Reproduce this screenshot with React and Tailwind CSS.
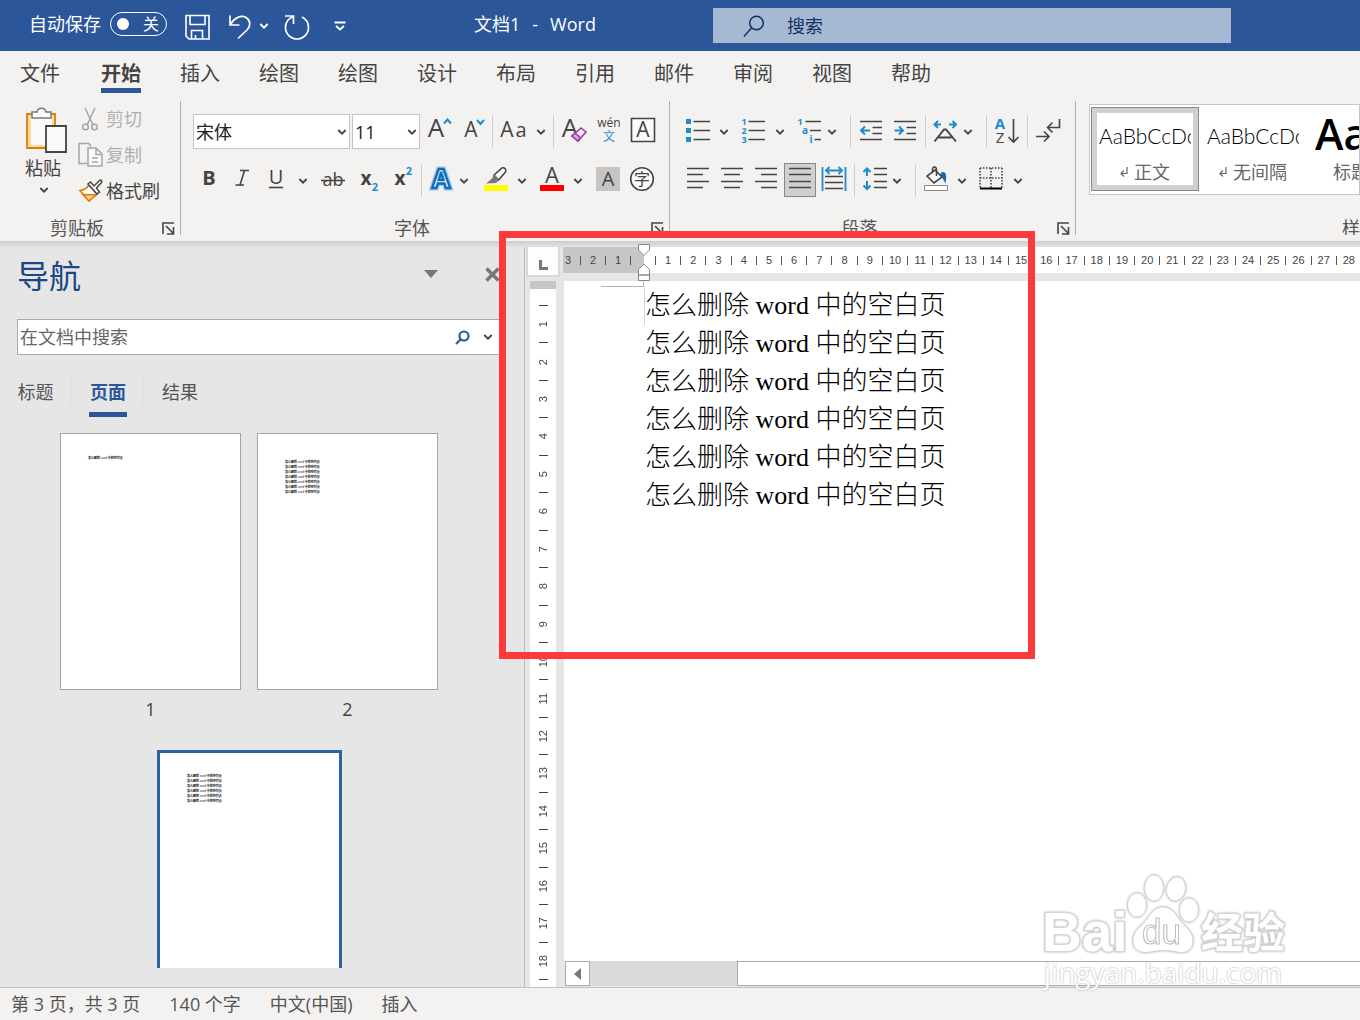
import React from "react";

const MENU = [
  "文件",
  "开始",
  "插入",
  "绘图",
  "绘图",
  "设计",
  "布局",
  "引用",
  "邮件",
  "审阅",
  "视图",
  "帮助",
];

const range = (n) => Array.from({ length: n }, (_, i) => i + 1);

/* ---------- small building blocks ---------- */

const Icon = ({ w = 28, h = 28, children }) => (
  <svg
    width={w}
    height={h}
    viewBox={`0 0 ${w} ${h}`}
    fill="none"
    stroke="#444"
    strokeWidth="1.6"
    className="shrink-0 overflow-visible"
    aria-hidden="true"
  >
    {children}
  </svg>
);

const Glyph = ({ x, y, size, color = "#444", bold, children }) => (
  <text
    x={x}
    y={y}
    fontSize={size}
    fill={color}
    stroke="none"
    fontWeight={bold ? 700 : 400}
    textAnchor="middle"
  >
    {children}
  </text>
);

const Chevron = () => (
  <Icon w={10} h={6}>
    <path d="M1.300 1L5 4.700 8.700 1" strokeWidth="1.800" />
  </Icon>
);

const Tool = ({ label, className, children }) => (
  <button
    type="button"
    aria-label={label}
    className={`flex h-[34px] shrink-0 items-center justify-center pb-0.5 ${className}`}
  >
    {children}
  </button>
);

const More = ({ label, className = "w-4" }) => (
  <button
    type="button"
    aria-label={`${label}选项`}
    className={`flex h-[34px] shrink-0 items-center justify-center pt-0.5 ${className}`}
  >
    <Chevron />
  </button>
);

const Separator = ({ className = "" }) => (
  <span className={`mt-px h-[33px] w-px shrink-0 bg-[#d0cecd] ${className}`} />
);

const Launcher = ({ label }) => (
  <button type="button" aria-label={label} className="mr-[5px]">
    <Icon w={13} h={13}>
      <path d="M1 12V1h11M4 4l7 7M11.5 5v7H5" />
    </Icon>
  </button>
);

const Group = ({ title, className, children }) => (
  <section
    className={`flex h-[134px] shrink-0 flex-col justify-between border-r border-[#b3b0ad] ${className}`}
  >
    {children}
    <div className="flex h-3.5 items-center">
      <h2 className="flex-1 pr-2 text-center text-lg leading-[14px] text-[#555]">
        {title}
      </h2>
      <Launcher label={`${title}设置`} />
    </div>
  </section>
);

/* ---------- title bar ---------- */

const TitleBar = () => (
  <header className="flex h-[51px] shrink-0 items-center bg-[#2b579a] pb-1 text-lg text-white">
    <label htmlFor="autosave" className="pl-[29px]">
      自动保存
    </label>
    <button
      id="autosave"
      type="button"
      role="switch"
      aria-checked="false"
      className="ml-[9px] flex h-6 w-[57px] items-center justify-between rounded-full border border-white pr-[7px] pl-1.5 text-base leading-none"
    >
      <span className="size-3 rounded-full bg-white" />
      <span>关</span>
    </button>
    <button type="button" aria-label="保存" className="mt-1.5 ml-[18px]">
      <svg width="25" height="26" viewBox="0 0 25 26" fill="none" stroke="#fff" strokeWidth="1.600">
        <path d="M1 1.500h23V25H4l-3-3zM5 1.500v9h15v-9M6.500 25v-8.500h11V25M10.500 25v-4" />
      </svg>
    </button>
    <button type="button" aria-label="撤消" className="mt-1.5 ml-[18px]">
      <svg width="24" height="26" viewBox="0 0 24 26" fill="none" stroke="#fff" strokeWidth="1.700">
        <path d="M2 1.500v9.500h9.500M2 11C6 4 13 .5 18 3.500c5 3 4.500 8.500 1.500 12L10 24.500" />
      </svg>
    </button>
    <button type="button" aria-label="撤消选项" className="mt-1 ml-[7px]">
      <svg width="10" height="6" viewBox="0 0 10 6" fill="none" stroke="#fff" strokeWidth="1.800">
        <path d="M1.300 1L5 4.700 8.700 1" />
      </svg>
    </button>
    <button type="button" aria-label="恢复" className="mt-1.5 ml-[15px]">
      <svg width="26" height="26" viewBox="0 0 26 26" fill="none" stroke="#fff" strokeWidth="1.700">
        <path d="M1 2h8.500v8M9.500 2.500C4 4.500 1.500 9 1.500 13.500a11.500 11.500 0 0 0 23 0c0-4.500-2.500-8.500-6.500-10.500" />
      </svg>
    </button>
    <button type="button" aria-label="自定义快速访问工具栏" className="mt-1 ml-6">
      <svg width="12" height="10" viewBox="0 0 12 10" fill="none" stroke="#fff" strokeWidth="1.800">
        <path d="M.5 1.500h11M2 5l4 3.500L10 5" />
      </svg>
    </button>
    <h1 className="ml-32 flex w-[239px] gap-3">
      <span>文档1</span>
      <span>-</span>
      <span>Word</span>
    </h1>
    <div className="mt-1 flex h-[35px] w-[518px] items-center bg-[#a6b9d3] pl-[30px]">
      <svg width="22" height="22" viewBox="0 0 22 22" fill="none" stroke="#13305f" strokeWidth="1.500">
        <circle cx="13.500" cy="8" r="6.800" />
        <path d="M8.500 13L1 21.500" />
      </svg>
      <input
        type="text"
        aria-label="搜索"
        placeholder="搜索"
        className="ml-[22px] min-w-0 flex-1 outline-none placeholder:text-[#13305f]"
      />
    </div>
  </header>
);

const MenuBar = () => (
  <nav className="flex h-[50px] shrink-0 gap-[39px] pt-[5px] pl-5 text-xl leading-9 text-[#444]">
    {MENU.map((name, i) => (
      <button
        key={i}
        type="button"
        className={
          i === 1
            ? "ml-0.5 h-[37px] border-b-[5px] border-[#2b579a] font-bold"
            : "h-[37px] border-b-[5px] border-transparent"
        }
      >
        {name}
      </button>
    ))}
  </nav>
);

/* ---------- ribbon ---------- */

const ClipboardGroup = () => (
  <Group title="剪贴板" className="w-[181px]">
    <div className="flex gap-3 pt-1.5 pl-6 text-lg">
      <button type="button" className="flex flex-col items-start text-[#444]">
        <svg width="43" height="46" viewBox="0 0 43 46" fill="none" strokeWidth="1.800">
          <path d="M3 7h28v34H3z" fill="#f9dc95" stroke="#e07a10" />
          <path d="M7 9h21v29H7z" fill="#fafafa" />
          <path d="M8 11V5h5c1-5 8-5 9 0h5v6z" fill="#fafafa" stroke="#7a7a7a" strokeWidth="1.500" />
          <path d="M22 19h20v26H22z" fill="#fafafa" stroke="#444" />
        </svg>
        <span className="mt-0.5 h-[26px] w-[38px] text-center leading-[26px]">粘贴</span>
        <span className="mt-1.5 flex w-10 justify-center">
          <Chevron />
        </span>
      </button>
      <div className="flex flex-col gap-3 leading-6">
        <button type="button" disabled className="flex items-center gap-[3px] text-[#b1b0af]">
          <Icon w={24} h={24}>
            <g stroke="#a5a5a5" strokeWidth="1.500">
              <path d="M6 1l8 17M16 1L8 18" />
              <circle cx="6.500" cy="20" r="2.800" />
              <circle cx="15.500" cy="20" r="2.800" />
            </g>
          </Icon>
          剪切
        </button>
        <button type="button" disabled className="flex items-center gap-[3px] text-[#b1b0af]">
          <Icon w={24} h={24}>
            <g stroke="#a5a5a5" strokeWidth="1.500">
              <path d="M8 20.500H0V.5h10l2 3" />
              <path d="M9 5h8l6 6v12H9z" fill="#fafafa" />
              <path d="M17 5v6.500h6M13 15h6M13 19h6" />
            </g>
          </Icon>
          复制
        </button>
        <button type="button" className="flex items-center gap-[3px] text-[#444]">
          <Icon w={24} h={24}>
            <path d="M1 11.500C5 11 8 9 10 6l8 9c-3 2-6 4-8 7z" fill="#fff" stroke="#e07a10" />
            <path d="M4 15.500l13 .5-7 6z" fill="#f9d48a" stroke="#e07a10" />
            <path
              d="M9 5l2.500-2 3.500 4 5.500-5.500c1.500-1 3 .5 2 2L17.500 9l3 4-2.500 2z"
              fill="#fafafa"
              strokeWidth="1.500"
            />
          </Icon>
          格式刷
        </button>
      </div>
    </div>
  </Group>
);

const SelectBox = ({ label, value, className }) => (
  <div className={`relative shrink-0 ${className}`}>
    <select
      aria-label={label}
      defaultValue={value}
      className="h-[35px] w-full appearance-none border border-[#c6c4c2] bg-white pl-0.5 text-lg text-[#222] outline-none"
    >
      <option>{value}</option>
    </select>
    <span className="pointer-events-none absolute top-[15px] right-[3px]">
      <Chevron />
    </span>
  </div>
);

const FontGroup = () => (
  <Group title="字体" className="w-[489px]">
    <div className="flex flex-col gap-3.5 pt-[13px] pl-3">
      <div className="flex h-[35px] items-start">
        <SelectBox label="字体" value="宋体" className="w-[157px]" />
        <SelectBox label="字号" value="11" className="ml-0.5 w-[68px]" />
        <Tool label="增大字号" className="w-9">
          <Icon>
            <Glyph x={12} y={21} size={26}>A</Glyph>
            <path d="M20 7.500l3.500-4 3.500 4" stroke="#1e8bcd" strokeWidth="2" />
          </Icon>
        </Tool>
        <Tool label="减小字号" className="w-9">
          <Icon>
            <Glyph x={11} y={21} size={21}>A</Glyph>
            <path d="M17 4l3.500 4L24 4" stroke="#1e8bcd" strokeWidth="2" />
          </Icon>
        </Tool>
        <Separator />
        <Tool label="更改大小写" className="w-11 pr-1">
          <Icon>
            <Glyph x={8} y={21} size={21}>A</Glyph>
            <Glyph x={22} y={21} size={20}>a</Glyph>
          </Icon>
        </Tool>
        <More label="更改大小写" className="w-4 pr-2" />
        <Separator />
        <Tool label="清除所有格式" className="ml-1 w-[34px]">
          <Icon>
            <Glyph x={9} y={21} size={26}>A</Glyph>
            <path d="M11 20l9-8 5 4-8 9z" fill="#f3f2f1" stroke="#9b3ba8" />
            <path d="M11 20l3-3 5.500 5-2.500 3z" fill="#d9a8e0" stroke="#9b3ba8" />
          </Icon>
        </Tool>
        <Tool label="拼音指南" className="w-[34px]">
          <Icon>
            <Glyph x={14} y={11} size={12}>wén</Glyph>
            <Glyph x={14} y={25} size={12} color="#2b8fd0">文</Glyph>
          </Icon>
        </Tool>
        <Tool label="字符边框" className="w-[34px]">
          <Icon>
            <path d="M2.500 2.500h23v23h-23z" fill="#fafafa" />
            <Glyph x={14} y={21} size={21}>A</Glyph>
          </Icon>
        </Tool>
      </div>
      <div className="flex h-[34px] items-start">
        <Tool label="加粗" className="w-8">
          <Icon><Glyph x={14} y={20} size={20} bold>B</Glyph></Icon>
        </Tool>
        <Tool label="倾斜" className="w-[34px]">
          <Icon>
            <path d="M12 5.500h9M7.500 20h8.500M16.500 5.500L12 20" />
          </Icon>
        </Tool>
        <Tool label="下划线" className="w-[34px]">
          <Icon>
            <Glyph x={14} y={19} size={20}>U</Glyph>
            <path d="M7 22.500h14" />
          </Icon>
        </Tool>
        <More label="下划线" className="w-5" />
        <Tool label="删除线" className="ml-[3px] w-[34px]">
          <Icon>
            <Glyph x={14} y={21} size={18}>ab</Glyph>
            <path d="M2 15.500h24" />
          </Icon>
        </Tool>
        <Tool label="下标" className="w-9">
          <Icon>
            <Glyph x={12} y={20} size={19} bold>x</Glyph>
            <Glyph x={21} y={26} size={11} color="#1e8bcd" bold>2</Glyph>
          </Icon>
        </Tool>
        <Tool label="上标" className="w-[34px]">
          <Icon>
            <Glyph x={11} y={20} size={19} bold>x</Glyph>
            <Glyph x={20} y={10} size={11} color="#1e8bcd" bold>2</Glyph>
          </Icon>
        </Tool>
        <Separator className="ml-px" />
        <Tool label="文本效果" className="ml-0.5 w-8">
          <Icon>
            <text x="15" y="23" fontSize="26" fontWeight="700" textAnchor="middle" stroke="#9cc8ec" strokeWidth="5">A</text>
            <text x="15" y="23" fontSize="26" fontWeight="700" textAnchor="middle" fill="#fff" stroke="#0f6cbd" strokeWidth="2.400">A</text>
          </Icon>
        </Tool>
        <More label="文本效果" />
        <Tool label="突出显示" className="ml-2 w-8">
          <Icon>
            <path d="M2 20h24v6H2z" fill="#ffff00" stroke="none" />
            <path d="M12 10l8-7c2.500-1 5 1.500 3.500 4l-7 8z" fill="#fafafa" />
            <path d="M12 9l5 6-3 3-10 .5 6-5z" fill="#777" stroke="none" />
          </Icon>
        </Tool>
        <More label="突出显示" className="ml-0.5 w-4" />
        <Tool label="字体颜色" className="ml-1.5 w-8">
          <Icon>
            <Glyph x={14} y={18} size={22}>A</Glyph>
            <path d="M2 20h24v6H2z" fill="#ff0000" stroke="none" />
          </Icon>
        </Tool>
        <More label="字体颜色" className="ml-0.5 w-4" />
        <Tool label="字符底纹" className="ml-[5px] w-[34px]">
          <Icon>
            <path d="M2 2h24v24H2z" fill="#c6c4c2" stroke="none" />
            <Glyph x={14} y={21} size={20}>A</Glyph>
          </Icon>
        </Tool>
        <Tool label="带圈字符" className="w-[34px]">
          <Icon>
            <circle cx="14" cy="14" r="11.300" fill="#fafafa" />
            <Glyph x={14} y={20} size={16}>字</Glyph>
          </Icon>
        </Tool>
      </div>
    </div>
  </Group>
);

const ParagraphGroup = () => (
  <Group title="段落" className="w-[406px]">
    <div className="flex flex-col gap-3.5 pt-[13px] pl-[11px]">
      <div className="flex h-[35px] items-start">
        <Tool label="项目符号" className="w-[33px]">
          <Icon>
            <path d="M2 3h5v5H2zM2 12h5v5H2zM2 21h5v5H2z" fill="#1e8bcd" stroke="none" />
            <path d="M9.500 5.500H26M9.500 14.500H26M9.500 23.500H26" />
          </Icon>
        </Tool>
        <More label="项目符号" className="w-5" />
        <Tool label="编号" className="w-[38px]">
          <Icon>
            <Glyph x={5} y={9} size={9} color="#1e8bcd" bold>1</Glyph>
            <Glyph x={5} y={18} size={9} color="#1e8bcd" bold>2</Glyph>
            <Glyph x={5} y={27} size={9} color="#1e8bcd" bold>3</Glyph>
            <path d="M9.500 5.500H26M9.500 14.500H26M9.500 23.500H26" />
          </Icon>
        </Tool>
        <More label="编号" />
        <Tool label="多级列表" className="ml-2 w-7">
          <Icon>
            <Glyph x={4} y={9} size={9} color="#1e8bcd" bold>1</Glyph>
            <Glyph x={9} y={18} size={10} color="#1e8bcd" bold>a</Glyph>
            <Glyph x={15} y={27} size={10} color="#1e8bcd" bold>i</Glyph>
            <path d="M9.500 5.500H25M14 14.500h11M18.500 23.500H25" />
          </Icon>
        </Tool>
        <More label="多级列表" />
        <Separator className="ml-2.5" />
        <Tool label="减少缩进量" className="ml-[3px] w-[34px]">
          <Icon>
            <path d="M3 5.500h22M15.500 11.500H25M15.500 17.500H25M3 23.500h22" />
            <path d="M13 14.500H4.500M8 10.500l-4 4 4 4" stroke="#1e8bcd" strokeWidth="2" />
          </Icon>
        </Tool>
        <Tool label="增加缩进量" className="w-[34px]">
          <Icon>
            <path d="M3 5.500h22M15.500 11.500H25M15.500 17.500H25M3 23.500h22" />
            <path d="M3.500 14.500H12M8 10.500l4 4-4 4" stroke="#1e8bcd" strokeWidth="2" />
          </Icon>
        </Tool>
        <Separator className="ml-[3px]" />
        <Tool label="中文版式" className="ml-[3px] w-8">
          <Icon>
            <path d="M3.500 25.500L13 13.500h2l10 12M7.500 21.500h13" strokeWidth="1.900" />
            <path d="M10 8.500H3.500M7 5L3.500 8.500 7 12M18 8.500h7M21.500 5L25 8.500 21.500 12" stroke="#1e8bcd" strokeWidth="2" />
          </Icon>
        </Tool>
        <More label="中文版式" className="w-3.5" />
        <Separator className="ml-[11px]" />
        <Tool label="排序" className="w-[38px]">
          <Icon>
            <Glyph x={8} y={13} size={15} color="#1e8bcd" bold>A</Glyph>
            <Glyph x={8} y={27} size={15}>Z</Glyph>
            <path d="M21.500 3v23M16.500 21l5 5 5-5" />
          </Icon>
        </Tool>
        <Separator className="ml-0.5" />
        <Tool label="显示编辑标记" className="w-10">
          <Icon>
            <path d="M25.500 3v8.500H14M18.500 6.500l-5 5 5 5M2 20.500h12.500M10 15.500l5 5-5 5" />
          </Icon>
        </Tool>
      </div>
      <div className="flex h-[34px] items-start">
        <Tool label="左对齐" className="w-[34px]">
          <Icon><path d="M3 3.500h22M3 9.500h16M3 16.500h22M3 22.500h16" /></Icon>
        </Tool>
        <Tool label="居中" className="w-[34px]">
          <Icon><path d="M3 3.500h22M6 9.500h16M3 16.500h22M6 22.500h16" /></Icon>
        </Tool>
        <Tool label="右对齐" className="w-[34px]">
          <Icon><path d="M3 3.500h22M9 9.500h16M3 16.500h22M9 22.500h16" /></Icon>
        </Tool>
        <Tool label="两端对齐" className="ml-px w-8 border border-[#8a8886] bg-[#d2d0ce]">
          <Icon><path d="M3 3.500h22M3 9.500h22M3 16.500h22M3 22.500h22" /></Icon>
        </Tool>
        <Tool label="分散对齐" className="ml-px w-[34px]">
          <Icon>
            <path d="M5 11.500h18M5 17.500h18M5 23.500h18" />
            <path d="M2.500 2v24M25.500 2v24M6 5.500h16M9.500 2L6 5.500 9.500 9M18.500 2L22 5.500 18.500 9" stroke="#1e8bcd" strokeWidth="1.800" />
          </Icon>
        </Tool>
        <Separator className="ml-[3px]" />
        <Tool label="行距" className="ml-0.5 w-9">
          <Icon>
            <path d="M13 3.500h13M13 9.500h13M13 16.500h13M13 22.500h13" />
            <path d="M6 11V3.500M2.500 7L6 3.500 9.500 7M6 16v8M2.500 20.500L6 24l3.500-3.500" stroke="#1e8bcd" strokeWidth="2" />
          </Icon>
        </Tool>
        <More label="行距" className="-ml-1 w-4" />
        <Separator className="ml-2.5" />
        <Tool label="底纹" className="ml-[3px] w-[34px]">
          <Icon>
            <path d="M20 8c3-1 4 2 3 8-1-2-2-4-4-6z" fill="#0f6cbd" stroke="#0f6cbd" />
            <path d="M13 5l7 7-8 6-7-7zM10.500 8V5c0-4 4-4 4 0v6" fill="#fafafa" />
            <path d="M2.500 20.500h23v5h-23z" fill="#fff" stroke="#8a8886" strokeWidth="1" />
          </Icon>
        </Tool>
        <More label="底纹" className="ml-px w-4" />
        <Tool label="边框" className="ml-1 w-[34px]">
          <Icon>
            <path d="M3 3h22M3 3v20M25 3v20M14 3v20M3 13h22" strokeDasharray="1.500 1.500" />
            <path d="M3 23.500h22" stroke="#000" strokeWidth="2" />
          </Icon>
        </Tool>
        <More label="边框" className="ml-0.5 w-4" />
      </div>
    </div>
  </Group>
);

const ReturnMark = () => (
  <svg width="8" height="10" viewBox="0 0 8 10" fill="none" stroke="#666" strokeWidth="1.200">
    <path d="M7 0v6.500H1M4 3.500l-3 3 3 3" />
  </svg>
);

const StylesGroup = () => (
  <section className="flex h-[134px] min-w-0 flex-1 flex-col justify-between overflow-hidden">
    <div className="mt-[3px] ml-[13px] flex h-[91px] gap-[3px] overflow-hidden border border-[#c8c6c4] bg-white pt-0.5 pb-[3px] pl-px text-lg text-[#666]">
      <button type="button" className="w-[108px] shrink-0 border border-[#8a8886] bg-[#d2d0ce] p-[5px]">
        <span className="flex h-full flex-col justify-between overflow-hidden bg-white pt-[7px]">
          <span className="ml-0.5 w-[92px] overflow-hidden text-left font-[Lato,sans-serif] text-[21px] leading-8 font-light text-black">
            AaBbCcDc
          </span>
          <span className="flex items-center justify-center gap-1.5 pb-[3px] leading-5">
            <ReturnMark />
            正文
          </span>
        </span>
      </button>
      <button type="button" className="flex w-[100px] shrink-0 flex-col justify-between pt-[13px] pb-[9px] pl-[5px]">
        <span className="w-[92px] overflow-hidden text-left font-[Lato,sans-serif] text-[21px] leading-8 font-light text-black">
          AaBbCcDc
        </span>
        <span className="flex w-[92px] items-center justify-center gap-1.5 leading-5">
          <ReturnMark />
          无间隔
        </span>
      </button>
      <button type="button" className="flex w-[108px] shrink-0 flex-col justify-between pt-0.5 pb-[9px] pl-2.5 text-left">
        <span className="w-full overflow-hidden text-[43px] leading-[50px] font-semibold text-black">AaB</span>
        <span className="pl-[18px] leading-5">标题 1</span>
      </button>
    </div>
    <h2 className="ml-[266px] h-3.5 text-lg leading-[14px] whitespace-nowrap text-[#555]">样式</h2>
  </section>
);

/* ---------- navigation pane ---------- */

const Line = () => (
  <>
    怎么删除 <span className="font-normal">word</span> 中的空白页
  </>
);

const Thumbnail = ({ lines, className }) => (
  <div
    className={`bg-white pl-[27px] text-left font-['Liberation_Serif','Noto_Sans_CJK_SC',serif] text-[3px] leading-[5px] font-bold text-black ${className}`}
  >
    {range(lines).map((n) => (
      <p key={n}>
        <Line />
      </p>
    ))}
  </div>
);

const NavigationPane = () => (
  <aside className="flex w-[525px] shrink-0 flex-col border-r border-[#bdbdbd] pl-[17px]">
    <div className="flex h-[58px] items-center text-[#1b4785]">
      <h2 className="w-[407px] text-[32px]">导航</h2>
      <button type="button" aria-label="窗格选项" className="-mt-1">
        <svg width="14" height="8" viewBox="0 0 14 8" fill="#777"><path d="M0 0h14L7 8z" /></svg>
      </button>
      <button type="button" aria-label="关闭" className="-mt-1 ml-[47px]">
        <svg width="15" height="15" viewBox="0 0 15 15" stroke="#777" strokeWidth="3.500">
          <path d="M1.500 1.500l12 12M13.500 1.500l-12 12" />
        </svg>
      </button>
    </div>
    <div className="mt-3.5 mr-5 flex h-9 items-center border border-[#ababab] bg-white">
      <input
        type="text"
        aria-label="在文档中搜索"
        placeholder="在文档中搜索"
        className="min-w-0 flex-1 pl-0.5 text-lg outline-none placeholder:text-[#666]"
      />
      <button type="button" aria-label="搜索">
        <svg width="15" height="15" viewBox="0 0 15 15" fill="none" stroke="#2b579a" strokeWidth="2.200">
          <circle cx="9" cy="6" r="4.500" />
          <path d="M6 9L1 14" />
        </svg>
      </button>
      <button type="button" aria-label="搜索选项" className="mr-2.5 ml-[13px]">
        <Chevron />
      </button>
    </div>
    <div className="mt-[21px] flex h-[41px] items-start text-lg leading-8 text-[#555]">
      <button type="button" className="w-[37px] whitespace-nowrap">标题</button>
      <span className="mx-4 h-[30px] w-px bg-[#dcdcdc]" />
      <button
        type="button"
        className="ml-0.5 h-[41px] w-[38px] border-b-[5px] border-[#2b579a] pb-1 font-bold whitespace-nowrap text-[#2b579a]"
      >
        页面
      </button>
      <span className="mr-4 ml-[15px] h-[30px] w-px bg-[#dcdcdc]" />
      <button type="button" className="ml-[3px] whitespace-nowrap">结果</button>
    </div>
    <div className="mt-4 ml-[43px] flex h-[297px] gap-4 text-center text-lg leading-[38px] text-[#444]">
      <figure className="w-[181px] shrink-0">
        <Thumbnail lines={1} className="h-[257px] border border-[#a0a4aa] pt-[22px]" />
        <figcaption>1</figcaption>
      </figure>
      <figure className="w-[181px] shrink-0">
        <Thumbnail lines={7} className="h-[257px] border border-[#a0a4aa] pt-[26px]" />
        <figcaption>2</figcaption>
      </figure>
    </div>
    <div className="mt-5 mb-[19px] ml-[140px] min-h-0 flex-1">
      <Thumbnail lines={6} className="h-full w-[185px] border-3 border-b-0 border-[#2b629f] pt-[21px]" />
    </div>
  </aside>
);

/* ---------- rulers and page ---------- */

const HorizontalRuler = () => (
  <div className="relative flex h-[26px] bg-white font-['Liberation_Sans',sans-serif] text-[11px] text-[#444]">
    <div className="flex w-[81px] shrink-0 items-center justify-end overflow-hidden bg-[#c6c6c6] pr-[13px]">
      {[3, 2, 1].map((n) => (
        <span key={n} className="w-[25px] shrink-0 border-r border-[#555] text-center leading-[9px]">
          {n}
        </span>
      ))}
    </div>
    <div className="min-w-0 flex-1 overflow-hidden pl-[11px]">
      <div className="grid h-full w-[706px] grid-cols-28 items-center">
        {range(28).map((n) => (
          <span key={n} className="border-l border-[#555] text-center leading-[9px]">
            {n}
          </span>
        ))}
      </div>
    </div>
    {/* indent markers */}
    <svg
      width="14"
      height="38"
      viewBox="0 0 14 38"
      fill="#fff"
      stroke="#888"
      className="absolute -top-[3px] left-[74px] z-10"
    >
      <path d="M1.500.5h11v5.500L7 11.500 1.500 6zM7 20l5.500 5.500V31h-11v-5.500zM1.500 31h11v5.500h-11z" />
    </svg>
  </div>
);

const VerticalRuler = () => (
  <div className="mt-1 flex w-[26px] flex-1 flex-col overflow-hidden bg-white font-['Liberation_Sans',sans-serif] text-[11px] text-[#444]">
    <div className="h-2 shrink-0 bg-[#c6c6c6]" />
    <div className="mt-4 grid h-[674px] shrink-0 grid-rows-18">
      {range(18).map((n) => (
        <div key={n} className="flex flex-col items-center justify-between">
          <span className="h-px w-[9px] bg-[#444]" />
          <span className="rotate-180 leading-none [writing-mode:vertical-rl]">{n}</span>
          <span />
        </div>
      ))}
    </div>
    <div className="mx-auto h-px w-[9px] shrink-0 bg-[#444]" />
  </div>
);

const Page = () => (
  <article className="ml-px min-h-0 flex-1 overflow-hidden bg-white">
    <div className="ml-[37px] h-1.5 w-[43px] border-r border-b border-[#b5b5b5]" />
    <div className="pl-20 font-['Liberation_Serif','Noto_Sans_CJK_SC',serif] text-[26px] leading-[38px] font-light text-black">
      {range(6).map((n) => (
        <p
          key={n}
          className={n === 1 ? "border-l border-[#d5d5d5]" : "border-l border-transparent"}
        >
          <Line />
        </p>
      ))}
    </div>
  </article>
);

const HorizontalScroll = () => (
  <div className="mb-px ml-0.5 flex h-[25px] shrink-0 bg-[#dadada]">
    <button
      type="button"
      aria-label="向左滚动"
      className="flex w-[25px] items-center justify-center border border-[#ababab] bg-white"
    >
      <svg width="7" height="12" viewBox="0 0 7 12" fill="#777"><path d="M7 0v12L0 6z" /></svg>
    </button>
    <div className="ml-[147px] flex-1 border border-r-0 border-[#ababab] bg-white" />
  </div>
);

const Editor = () => (
  <main className="flex min-w-0 flex-1">
    <div className="flex w-[38px] shrink-0 flex-col items-center pr-0.5">
      <button
        type="button"
        aria-label="制表符"
        className="flex h-[30px] w-[34px] shrink-0 items-end justify-center border-2 border-t-0 border-[#d8d8d8] bg-[#fdfdfd] pb-[5px]"
      >
        <svg width="9" height="10" viewBox="0 0 9 10" stroke="#777" strokeWidth="3" fill="none">
          <path d="M1.500 0v8.500H9" />
        </svg>
      </button>
      <VerticalRuler />
    </div>
    <div className="flex min-w-0 flex-1 flex-col gap-2">
      <HorizontalRuler />
      <div className="flex min-h-0 flex-1 flex-col">
        <Page />
        <HorizontalScroll />
      </div>
    </div>
  </main>
);

const StatusBar = () => (
  <footer className="flex h-[33px] shrink-0 items-center gap-[29px] border-t border-[#c3c3c3] bg-[#f3f2f1] pl-[11px] text-lg text-[#555]">
    <span>第 3 页，共 3 页</span>
    <span>140 个字</span>
    <span>中文(中国)</span>
    <span>插入</span>
  </footer>
);

/* white logo with a soft grey edge, floating above the page */
const Watermark = () => (
  <div className="pointer-events-none absolute right-[72px] bottom-8 w-[244px] text-white [filter:drop-shadow(0_0_1px_#aaa)]">
    <svg width="244" height="84" viewBox="0 0 244 84" fill="#fff" stroke="#d5d5d5" strokeWidth="1">
      <g fontWeight="700" fontFamily="Liberation Sans, Noto Sans CJK SC, sans-serif">
        <text x="-2" y="79" fontSize="55" strokeWidth="2" paintOrder="stroke">Bai</text>
        <ellipse cx="93" cy="33" rx="9.500" ry="12" />
        <ellipse cx="110" cy="16" rx="9.500" ry="13" />
        <ellipse cx="132" cy="17" rx="9.500" ry="12" transform="rotate(12 132 17)" />
        <ellipse cx="145" cy="38" rx="9.500" ry="12" />
        <path d="M119 35c8 0 12 6 16 12 6 8 14 12 14 22 0 10-8 13-16 11-9-2-17-2-27 0-9 2-17-2-17-11 0-11 8-14 14-22 4-6 8-12 16-12z" />
        <text x="98" y="72" fontSize="35" fontWeight="400" fill="#fff" stroke="#bbb">du</text>
        <text x="157" y="76" fontSize="42" strokeWidth="2" paintOrder="stroke">经验</text>
      </g>
    </svg>
    <p className="text-[28px] leading-8">jingyan.baidu.com</p>
  </div>
);

const App = () => {
  return (
    <div className="relative flex h-screen flex-col overflow-hidden bg-[#f3f2f1] font-['Open_Sans','Noto_Sans_CJK_SC',sans-serif]">
      <TitleBar />
      <MenuBar />
      <div className="flex h-[140px] shrink-0">
        <ClipboardGroup />
        <FontGroup />
        <ParagraphGroup />
        <StylesGroup />
      </div>
      <div className="h-1.5 shrink-0 bg-linear-to-b from-[#cdcdcd] to-[#e2e2e2]" />
      <div className="flex min-h-0 flex-1 bg-[#e6e6e6]">
        <NavigationPane />
        <Editor />
      </div>
      <StatusBar />
      <Watermark />
      {/* highlight frame */}
      <div className="pointer-events-none absolute top-[231px] left-[499px] z-20 h-[428px] w-[536px] border-7 border-[#fc3a3a]" />
    </div>
  );
};

export default App;
